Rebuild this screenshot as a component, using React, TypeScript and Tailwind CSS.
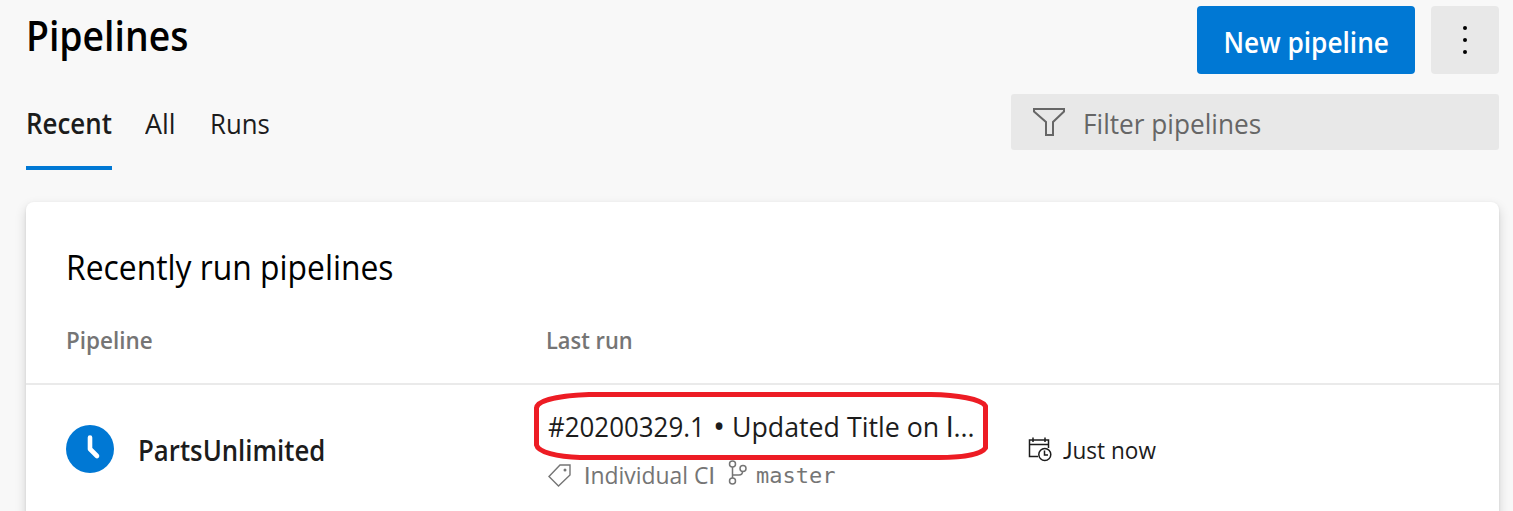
import type { ReactNode } from 'react';

function FilterIcon() {
  return (
    <svg width="34" height="30" viewBox="0 0 34 30" fill="none" stroke="#666" strokeWidth="2" className="shrink-0">
      <path d="M2 2H32V4.500L21 15V28H14V15L2 4.500Z" />
    </svg>
  );
}

function ClockBadge() {
  return (
    <svg width="48" height="48" viewBox="0 0 48 48" fill="none" className="shrink-0">
      <circle cx="24" cy="24" r="24" fill="#0078d4" />
      <path d="M24 12.5V24L31 31" stroke="#fff" strokeWidth="4.6" strokeLinecap="round" strokeLinejoin="round" />
    </svg>
  );
}

function TagIcon() {
  return (
    <svg width="24" height="24" viewBox="0 0 24 24" fill="none" stroke="#757575" strokeWidth="1.4" className="shrink-0">
      <path d="M12 2H22V12L10.500 23L1 13.5Z" />
      <circle cx="17" cy="7" r="1.5" fill="#757575" stroke="none" />
    </svg>
  );
}

function BranchIcon() {
  return (
    <svg width="20" height="26" viewBox="0 0 20 26" fill="none" stroke="#757575" strokeWidth="1.5" className="-mt-1 shrink-0">
      <circle cx="4.5" cy="4" r="3" />
      <circle cx="4.5" cy="21" r="3" />
      <circle cx="15" cy="8.5" r="3" />
      <path d="M4.5 7V18M4.5 15H11Q14.500 15 14.500 11.500" />
    </svg>
  );
}

function CalendarClockIcon() {
  return (
    <svg width="24" height="26" viewBox="0 0 24 26" fill="none" stroke="#1c1c1c" strokeWidth="1.5" className="mt-px shrink-0">
      <path d="M10 19.500H1.500V3H20.500V11M1.500 7.500H20.500M5 0.500V5M17 0.500V5" />
      <circle cx="16.800" cy="17.500" r="6" />
      <path d="M16.500 13.500V18H20" />
    </svg>
  );
}

function Column({ className, children }: { className: string; children: ReactNode }) {
  return <div className={`shrink-0 whitespace-nowrap ${className}`}>{children}</div>;
}

export default function App() {
  return (
    <main className="flex h-[511px] w-[1513px] flex-col overflow-hidden bg-[#f8f8f8] pl-[26px] pr-[14px] font-['Open_Sans',sans-serif] text-[#1c1c1c]">
      <header className="flex h-[74px] shrink-0 items-start justify-between pt-[6px]">
        <h1 className="origin-left scale-x-[0.889] text-[42px] leading-[58px] font-semibold text-black">Pipelines</h1>
        <div className="flex gap-4">
          <button className="h-[68px] w-[218px] rounded bg-[#0078d4] pt-[5px] text-[28px] leading-[63px] font-semibold whitespace-nowrap text-white">
            <span className="inline-block scale-x-[0.937]">New pipeline</span>
          </button>
          <button aria-label="More actions" className="flex h-[68px] w-[68px] flex-col items-center justify-center gap-2 rounded bg-[#e8e8e8]">
            <span className="size-1 rounded-full bg-black" />
            <span className="size-1 rounded-full bg-black" />
            <span className="size-1 rounded-full bg-black" />
          </button>
        </div>
      </header>

      <div className="flex h-[128px] shrink-0 items-start justify-between pt-5">
        <nav className="flex text-[28px] leading-[58px] whitespace-nowrap">
          <a className="h-[76px] w-[86px] border-b-4 border-[#0078d4] font-semibold">
            <span className="inline-block origin-left scale-x-[0.925]">Recent</span>
          </a>
          <a className="ml-[33px] w-[65px]"><span className="inline-block origin-left scale-x-[0.96]">All</span></a>
          <a><span className="inline-block origin-left scale-x-[0.92]">Runs</span></a>
        </nav>
        <label className="flex h-[56px] w-[488px] items-center rounded-[3px] bg-[#e8e8e8] pl-[21px] text-[28px] text-[#666]">
          <FilterIcon />
          <span className="ml-[17px] origin-left scale-x-[0.936] pt-px whitespace-nowrap">Filter pipelines</span>
        </label>
      </div>

      <section className="h-[340px] w-[1473px] shrink-0 rounded-t-lg bg-white shadow-[0_5px_12px_rgba(0,0,0,0.16),0_1px_3px_rgba(0,0,0,0.08)]">
        <h2 className="h-[110px] pt-[42px] pl-10 text-[34px] leading-[46px] whitespace-nowrap text-black">
          <span className="inline-block origin-left scale-x-[0.936]">Recently run pipelines</span>
        </h2>
        <div className="flex h-[73px] border-b-2 border-[#eaeaea] pl-10 text-[24px] leading-[55px] font-semibold text-[#757575]">
          <Column className="w-[480px]"><span className="inline-block origin-left scale-x-[0.935]">Pipeline</span></Column>
          <Column className="w-[482px]"><span className="inline-block origin-left scale-x-[0.91]">Last run</span></Column>
        </div>
        <div className="flex h-[157px] pl-10">
          <Column className="flex w-[480px] items-start pt-10">
            <ClockBadge />
            <span className="ml-6 origin-left scale-x-[0.92] pt-[3px] text-[28px] leading-[44px] font-semibold">PartsUnlimited</span>
          </Column>
          <Column className="relative w-[482px] pt-[19px] pl-[2px]">
            <svg className="absolute top-[6px] left-[-14px]" width="458" height="70" viewBox="0 0 458 70" fill="none" stroke="#ed1c24" strokeWidth="5">
              <path d="M4.500 17C5 8 32 4.500 57 3.500H399C425 4 449 8 453.500 15V57C449 64 427 66.500 407 66.500H48C25 66 6 61 4.500 54Z" strokeLinejoin="round" />
            </svg>
            <div className="flex h-[47px] text-[28px] leading-[44px]">
              <span className="w-[165px] origin-left scale-x-[0.925]">#20200329.1</span>
              <span className="w-[19px] origin-left scale-[1.15]">•</span>
              <span className="origin-left scale-x-[0.955]">Updated Title on <span className="font-['Lato',sans-serif]">I</span>...</span>
            </div>
            <div className="flex h-[48px] items-center text-[24px] text-[#757575]">
              <TagIcon />
              <span className="ml-3 w-[144px] origin-left scale-x-[0.955]">
                <span className="font-['Lato',sans-serif]">I</span>ndividual C<span className="font-['Lato',sans-serif]">I</span>
              </span>
              <BranchIcon />
              <span className="ml-2 pt-px font-['DejaVu_Sans_Mono',monospace] text-[22px]">master</span>
            </div>
          </Column>
          <Column className="flex items-start pt-[51px]">
            <CalendarClockIcon />
            <span className="ml-[11px] origin-left scale-x-[0.94] text-[24px] leading-[28px]"><span className="font-['Lato',sans-serif]">J</span>ust now</span>
          </Column>
        </div>
      </section>
    </main>
  );
}
